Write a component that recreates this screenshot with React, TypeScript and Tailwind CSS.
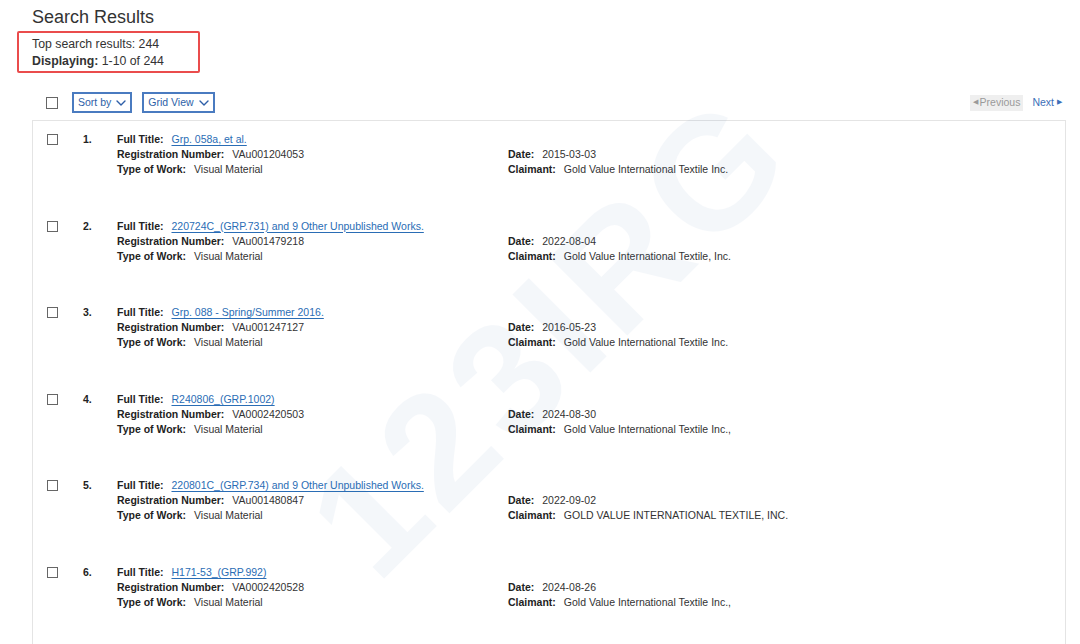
import React from "react";

interface ResultItem {
  title: string;
  regNumber: string;
  workType: string;
  date: string;
  claimant: string;
}

const results: ResultItem[] = [
  { title: "Grp. 058a, et al.", regNumber: "VAu001204053", workType: "Visual Material", date: "2015-03-03", claimant: "Gold Value International Textile Inc." },
  { title: "220724C_(GRP.731) and 9 Other Unpublished Works.", regNumber: "VAu001479218", workType: "Visual Material", date: "2022-08-04", claimant: "Gold Value International Textile, Inc." },
  { title: "Grp. 088 - Spring/Summer 2016.", regNumber: "VAu001247127", workType: "Visual Material", date: "2016-05-23", claimant: "Gold Value International Textile Inc." },
  { title: "R240806_(GRP.1002)", regNumber: "VA0002420503", workType: "Visual Material", date: "2024-08-30", claimant: "Gold Value International Textile Inc.," },
  { title: "220801C_(GRP.734) and 9 Other Unpublished Works.", regNumber: "VAu001480847", workType: "Visual Material", date: "2022-09-02", claimant: "GOLD VALUE INTERNATIONAL TEXTILE, INC." },
  { title: "H171-53_(GRP.992)", regNumber: "VA0002420528", workType: "Visual Material", date: "2024-08-26", claimant: "Gold Value International Textile Inc.," },
];

const Chevron = () => (
  <svg width="10" height="6" viewBox="0 0 10 6" fill="none" className="ml-[5px]">
    <path d="M1 1l4 4 4-4" stroke="#2e5fa8" strokeWidth="1.4" strokeLinecap="round" strokeLinejoin="round" />
  </svg>
);

const Field = ({ label, children }: { label: string; children: React.ReactNode }) => (
  <div className="flex gap-[8px] h-[15px] leading-[15px] whitespace-nowrap">
    <span className="font-bold text-[#222]">{label}</span>
    <span className="text-[#333]">{children}</span>
  </div>
);

const ResultRow = ({ item, index }: { item: ResultItem; index: number }) => (
  <div className="flex h-[86.6px] pt-[11px]">
    <div className="w-[50px] pl-[14px] pt-[2px]">
      <div className="w-[11px] h-[11px] border border-[#666] bg-white" />
    </div>
    <div className="w-[34px] font-bold text-[#222] leading-[15px]">{index}.</div>
    <div className="flex-1">
      <Field label="Full Title:">
        <a className="text-[#2a6db5] underline underline-offset-[2px] decoration-[0.5px]" href="#">{item.title}</a>
      </Field>
      <div className="grid grid-cols-[391px_1fr]">
        <Field label="Registration Number:">{item.regNumber}</Field>
        <Field label="Date:">{item.date}</Field>
        <Field label="Type of Work:">{item.workType}</Field>
        <Field label="Claimant:">{item.claimant}</Field>
      </div>
    </div>
  </div>
);

export default function App() {
  return (
    <div className="relative w-[1080px] h-[644px] overflow-hidden bg-white font-['Liberation_Sans',Arial,sans-serif] text-[#333]">
      <div className="pl-[32px] pt-[6px]">
        <h1 className="text-[18px] leading-[22px] text-[#333]">Search Results</h1>
      </div>
      <div className="ml-[17px] mt-[3px] w-[183px] h-[42px] border-2 border-[#ea4c4c] rounded-[2px] pl-[13px] pt-[3px] text-[12.3px] leading-[17px] text-[#333]">
        <div>Top search results: 244</div>
        <div><span className="font-bold">Displaying:</span> 1-10 of 244</div>
      </div>
      <div className="flex items-center mt-[19px] h-[21px] pl-[46px] pr-[18px] text-[10.5px]">
        <div className="w-[12px] h-[12px] border border-[#666] bg-white" />
        <button className="ml-[14px] flex items-center h-[21px] px-[4px] border-2 border-[#4a7bc0] text-[#2e5fa8]">
          Sort by<Chevron />
        </button>
        <button className="ml-[10px] flex items-center h-[21px] px-[4px] border-2 border-[#4a7bc0] text-[#2e5fa8]">
          Grid View<Chevron />
        </button>
        <div className="ml-auto flex items-center">
          <span className="flex items-center h-[16px] px-[3px] bg-[#efefef] text-[#9a9a9a] text-[10.5px]">
            <span className="text-[7px] mr-[2px]">◀</span>Previous
          </span>
          <span className="ml-[9px] flex items-center text-[#3c6fb8] text-[10.5px]">
            Next<span className="text-[7px] ml-[3px]">▶</span>
          </span>
        </div>
      </div>
      <div className="ml-[32px] mt-[7px] w-[1034px] border border-[#e4e4e4] text-[10.5px] h-[600px]">
        {results.map((r, i) => (
          <ResultRow key={i} item={r} index={i + 1} />
        ))}
      </div>
      <div className="absolute left-[550px] top-[335px] -translate-x-1/2 -translate-y-1/2 -rotate-45 pointer-events-none select-none text-[160px] font-bold leading-none tracking-[8px] text-[#3a6fb0] opacity-[0.05] whitespace-nowrap">
        123IRG
      </div>
    </div>
  );
}
